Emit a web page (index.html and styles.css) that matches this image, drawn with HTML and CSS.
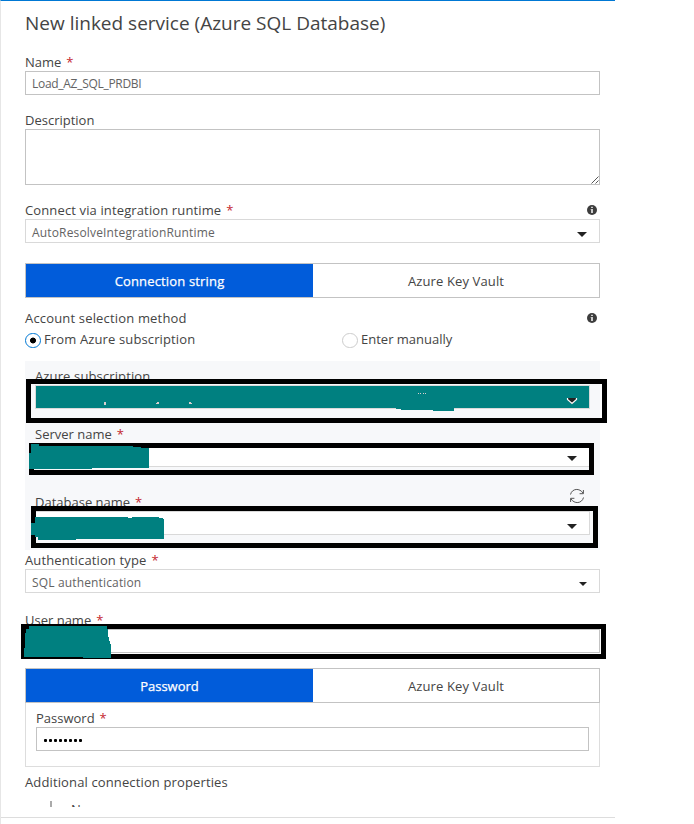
FILE: index.html
```html
<!DOCTYPE html>
<html lang="en">
<head>
<meta charset="utf-8">
<title>New linked service</title>
<link rel="stylesheet" href="styles.css">
</head>
<body>
<main class="blade">
  <h1 class="title">New linked service (Azure SQL Database)</h1>

  <div class="field name">
    <div class="label"><span>Name</span><i>*</i></div>
    <div class="input"><span class="t-name">Load_AZ_SQL_PRDBI</span></div>
  </div>

  <div class="field description">
    <div class="label"><span>Description</span></div>
    <div class="input area">
      <svg class="grip" width="8" height="8" viewBox="0 0 8 8"><path d="M0.5 7.5l7-7M4.5 7.5l3-3" stroke="#444" stroke-width=".9"/></svg>
    </div>
  </div>

  <div class="field runtime">
    <div class="label"><span class="t-connect">Connect via integration runtime</span><i>*</i>
      <svg class="info" width="10" height="10" viewBox="0 0 10 10"><circle cx="5" cy="5" r="5" fill="#3d3d3d"/><path d="M4 1.700h2v1.400H4zM3.600 4H6v4H4V4.800h-.4z" fill="#ccc"/></svg>
    </div>
    <div class="input select"><span class="t-auto">AutoResolveIntegrationRuntime</span><b class="arrow"></b></div>
  </div>

  <div class="tabs">
    <div class="tab active"><span class="t-conn">Connection string</span></div>
    <div class="tab"><span class="t-vault">Azure Key Vault</span></div>
  </div>

  <div class="label method"><span class="t-account">Account selection method</span>
    <svg class="info" width="10" height="10" viewBox="0 0 10 10"><circle cx="5" cy="5" r="5" fill="#3d3d3d"/><path d="M4 1.700h2v1.400H4zM3.600 4H6v4H4V4.800h-.4z" fill="#ccc"/></svg>
  </div>
  <div class="radios">
    <div class="option"><b class="radio on"></b><span class="t-from">From Azure subscription</span></div>
    <div class="option"><b class="radio"></b><span>Enter manually</span></div>
  </div>

  <section class="group">
    <div class="field">
      <div class="label"><span class="t-from">Azure subscription</span></div>
      <div class="input select"></div>
    </div>
    <div class="field server">
      <div class="label"><span>Server name</span><i>*</i></div>
      <div class="input select"><b class="arrow"></b></div>
    </div>
    <div class="field database">
      <div class="label"><span>Database name</span><i>*</i>
        <svg class="refresh" width="16" height="16" viewBox="0 0 16 16" fill="none" stroke="#555" stroke-width="1"><path d="M1.500 6.500C3 .2 11 -.2 14 5.200M14.500 9.500C13 15.800 5 16.200 2 10.800M14.400 2v3.700h-3.800M1.600 14v-3.700h3.800"/></svg>
      </div>
      <div class="input select"><b class="arrow"></b></div>
    </div>
  </section>

  <div class="field auth">
    <div class="label"><span class="t-authl">Authentication type</span><i>*</i></div>
    <div class="input select"><span class="t-sql">SQL authentication</span><b class="arrow"></b></div>
  </div>

  <div class="field user">
    <div class="label"><span>User name</span><i>*</i></div>
    <div class="input"></div>
  </div>

  <div class="tabs second">
    <div class="tab active"><span>Password</span></div>
    <div class="tab"><span class="t-vault">Azure Key Vault</span></div>
  </div>
  <section class="secret">
    <div class="label"><span>Password</span><i class="near">*</i></div>
    <div class="input"><span class="dots"><b></b><b></b><b></b><b></b><b></b><b></b><b></b><b></b></span></div>
  </section>

  <div class="label extra"><span class="t-extra">Additional connection properties</span></div>
  <div class="more">
    <svg width="14" height="14" viewBox="0 0 14 14"><path d="M7 0v14M0 7h14" stroke="#aaa" stroke-width="2"/></svg>
    <span>New</span>
  </div>
  <footer class="footer"></footer>

  <svg class="marks" width="615" height="824" viewBox="0 0 615 824" shape-rendering="crispEdges">
    <path d="M0 172h1v3H0zM0 176h1v2H0zM0 184h1v5H0zM0 195h1v2H0zM0 199h1v1H0zM0 134h1v3H0z" fill="#b5b5b5"/>
    <rect x="36" y="386" width="553" height="22" fill="#008080"/>
    <path d="M396 408h58v3h-21v-1h-32v-1h-5z" fill="#008080"/>
    <path d="M104 402h2v3h-2zM156 403h2v1h-2zM157 402h2v2h-2zM189 402h2v2h-2zM191 403h1v1h-1zM418 393h1v1h-1zM420 393h1v1h-1zM423 393h1v1h-1zM425 393h1v1h-1z" fill="#d9cfcf"/>
    <path d="M567 398h10v2l-5 4-5-4z" fill="#222"/>
    <path d="M567.500 398v1.500l4.500 4 4.500-4V398" fill="none" stroke="#fff" stroke-width="1.200" shape-rendering="auto"/>
    <g fill="none" stroke="#000" stroke-width="5">
      <rect x="28.500" y="381.500" width="576" height="39"/>
      <rect x="31.500" y="445.500" width="560" height="27"/>
      <rect x="33.500" y="508.500" width="562" height="37"/>
      <rect x="23.500" y="626.500" width="580" height="30"/>
    </g>
    <g fill="#008080">
      <path d="M31 444h8v2h94v1h8v1h8v20H92v1H29v-16h2z"/>
      <path d="M35 517h93v1h4v-1h27v1h4v1h1v20h-88v1H38v-3h-3v-2h-4v-12h4z"/>
      <path d="M29 626h78v3h1v8h1v4h1v3h1v14H83v-1H24v-9h1v-15h1v-4h3z"/>
    </g>
  </svg>
</main>
</body>
</html>
```
FILE: styles.css
```css
* { box-sizing: border-box; }
body { margin: 0; background: #fff; font-family: "Open Sans", "Noto Sans", sans-serif; color: #444; }
.blade { position: relative; width: 615px; height: 824px; padding: 0 15px 0 24px; border-top: 1px solid #0078d4; border-left: 1px solid #e6e6e6; overflow: hidden; }
.title { margin: 9px 0 0; height: 27px; line-height: 27px; font-size: 19px; font-weight: 400; white-space: nowrap; }
.label { display: flex; align-items: center; height: 18px; font-size: 13px; line-height: 18px; white-space: nowrap; }
.label i { margin-left: 5px; font-style: normal; color: #c4262e; }
.input { display: flex; align-items: center; height: 24px; padding-left: 6px; border: 1px solid #c3c3c3; background: #fff; font-size: 12px; color: #636363; white-space: nowrap; }
.select { border-color: #d9d9d9; }
.select span { margin-top: 2px; }
.name { margin-top: 16px; }
.description { margin-top: 16px; }
.area { height: 56px; align-items: flex-end; justify-content: flex-end; }
.runtime { margin-top: 16px; }
.info { margin-left: auto; margin-right: 3px; }
.arrow { width: 0; height: 0; margin: 6px 12px 0 auto; border: 5px solid transparent; border-top-color: #222; border-bottom: 0; }
.tabs { display: grid; grid-template-columns: 287px 1fr; height: 35px; margin-top: 20px; border: 1px solid #c3c3c3; font-size: 13px; }
.tab { display: flex; align-items: center; justify-content: center; }
.active { background: #015cda; color: #fff; -webkit-text-stroke: .25px #fff; }
.method { margin-top: 11px; }
.radios { display: grid; grid-template-columns: 317px 1fr; height: 18px; margin-top: 3px; font-size: 13px; }
.option { display: flex; align-items: center; gap: 3px; line-height: 18px; }
.radio { width: 16px; height: 15px; margin-top: 2px; border: 1px solid #ccc; border-radius: 8px; }
.on { border-color: #0078d4; background: radial-gradient(circle, #000 2.6px, transparent 3.3px); }
.group { height: 189px; margin-top: 13px; padding: 6px 10px 0; background: #f7f8fa; }
.server { margin-top: 16px; }
.database { margin-top: 26px; }
.refresh { margin: -12px 5px 0 auto; }
.auth { margin-top: 1px; }
.auth .arrow { margin-top: 5px; border-width: 4px 4px 0; }
.user { margin-top: 18px; }
.second { margin-top: 15px; }
.secret { height: 64px; padding: 6px 10px; border: 1px solid #ddd; border-top: 0; }
.dots { display: flex; gap: 2px; padding-left: 1px; margin-top: 3px; }
.dots b { width: 3px; height: 3px; border-radius: 1px; background: #000; }
.extra { margin-top: 6px; }
.more { display: flex; gap: 13px; height: 6px; margin: 10px 0 0 18px; padding-left: 1px; overflow: hidden; font-size: 13px; line-height: 17px; }
.footer { margin: 10px -15px 0 -24px; border-top: 1px solid #ddd; }
.marks { position: absolute; left: -1px; top: -1px; }
.t-name { letter-spacing: -.29px; }
.t-connect, .t-extra { letter-spacing: .13px; }
.t-auto { letter-spacing: .16px; }
.t-sql { letter-spacing: .15px; }
.t-conn { letter-spacing: .16px; }
.t-vault { letter-spacing: .12px; }
.t-account { letter-spacing: .17px; }
.t-from { letter-spacing: .13px; }
.t-authl { letter-spacing: .13px; }
```
